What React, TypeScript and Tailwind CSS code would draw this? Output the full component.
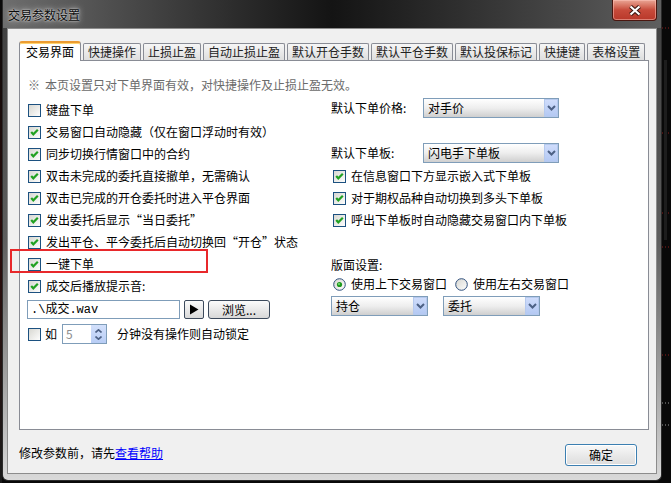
import React from 'react'

const CheckBox = ({ checked = false }: { checked?: boolean }) => (
    <svg width="13" height="13" viewBox="0 0 13 13" className="shrink-0">
        <defs>
            <linearGradient id="cbfill" x1="0" y1="0" x2="1" y2="1">
                <stop offset="0" stopColor="#d6d6d0" />
                <stop offset="1" stopColor="#ffffff" />
            </linearGradient>
        </defs>
        <rect x="0.5" y="0.5" width="12" height="12" fill="url(#cbfill)" stroke="#1c5180" />
        {checked && <path d="M3.2 6 L5.3 8.3 L9.8 3.8" fill="none" stroke="#21a121" strokeWidth="2.2" />}
    </svg>
)

const Radio = ({ checked = false }: { checked?: boolean }) => (
    <svg width="13" height="13" viewBox="0 0 13 13" className="shrink-0">
        <defs>
            <linearGradient id="rbfill" x1="0" y1="0" x2="1" y2="1">
                <stop offset="0" stopColor="#d6d6d0" />
                <stop offset="1" stopColor="#ffffff" />
            </linearGradient>
        </defs>
        <circle cx="6.5" cy="6.5" r="5.8" fill="url(#rbfill)" stroke="#2f4f7c" />
        {checked && (
            <>
                <circle cx="6.5" cy="6.5" r="2.6" fill="#1e9a1e" />
                <circle cx="6" cy="6" r="1" fill="#7fe07f" />
            </>
        )}
    </svg>
)

const Chevron = () => (
    <svg width="9" height="6" viewBox="0 0 9 6">
        <path d="M1 1 L4.5 4.5 L8 1" fill="none" stroke="#4d6185" strokeWidth="2" />
    </svg>
)

const Select = ({ value, width }: { value: string; width: string }) => (
    <div className={`flex h-[20px] ${width} border border-[#7f9db9] bg-linear-to-b from-[#ffffff] via-[#eeeeee] to-[#cfcfcf]`}>
        <span className="flex flex-1 items-center pl-[4px] text-[12px] leading-none text-black">{value}</span>
        <span className="flex w-[14px] items-center justify-center border border-[#b5c9ee] bg-linear-to-b from-[#cfdcfb] to-[#b4c9f3]">
            <Chevron />
        </span>
    </div>
)

const CheckRow = ({ checked, label }: { checked?: boolean; label: string }) => (
    <div className="flex h-[22px] items-center gap-[5px]">
        <CheckBox checked={checked} />
        <span className="whitespace-nowrap leading-none">{label}</span>
    </div>
)

const tabs = ['交易界面', '快捷操作', '止损止盈', '自动止损止盈', '默认开仓手数', '默认平仓手数', '默认投保标记', '快捷键', '表格设置']

const SideStrip = () => (
    <svg width="9" height="483" viewBox="0 0 9 483" className="block">
        <rect width="9" height="483" fill="#090909" />
        {[28, 133, 213, 247, 355].map((y) => (
            <line key={y} x1="0" y1={y} x2="9" y2={y} stroke="#8c1c1c" strokeDasharray="1 2" />
        ))}
        {[403, 425].map((y) => (
            <line key={y} x1="0" y1={y} x2="9" y2={y} stroke="#9a9a9a" strokeDasharray="1 2" />
        ))}
        <rect x="2" y="60" width="3" height="180" fill="#1d1d1d" />
    </svg>
)

const App = () => {
    return (
        <div className="flex h-[483px] w-[671px] overflow-hidden bg-[#090909] font-['Noto_Sans_CJK_SC',sans-serif] text-[12px] text-black">
            <div className="w-[2px] bg-linear-to-b from-[#0a0a0a] via-[#2a0a0a] to-[#1a1a1a]" />

            {/* window */}
            <div className="flex h-[481px] w-[660px] flex-col rounded-b-[6px] border border-t-0 border-[#2b2b2b] bg-linear-to-b from-[#3e3e3e] via-[#5e5e5e] to-[#d9d9d9]">
                {/* title bar */}
                <div className="flex h-[28px] items-start bg-linear-to-r from-[#6e6e6e] via-[#141414] to-[#5f5f5f]">
                    <span className="pl-[5px] pt-[8px] text-[12px] leading-[14px] text-[#0a0a0a] [text-shadow:0_0_6px_rgba(255,255,255,0.85),0_0_2px_rgba(255,255,255,0.9)]">
                        交易参数设置
                    </span>
                    <div className="ml-auto mr-[4px] flex h-[21px] w-[45px] items-center justify-center rounded-b-[4px] border border-t-0 border-[#4a160f] bg-linear-to-b from-[#e9a595] via-[#c74a3a] to-[#b8382a] shadow-[inset_0_0_0_1px_rgba(255,200,190,0.5)]">
                        <svg width="14" height="11" viewBox="0 0 14 11">
                            <path d="M2.5 1.5 L11.5 9.5 M11.5 1.5 L2.5 9.5" stroke="#3b1710" strokeWidth="4.2" />
                            <path d="M2.5 1.5 L11.5 9.5 M11.5 1.5 L2.5 9.5" stroke="#ffffff" strokeWidth="2.2" />
                        </svg>
                    </div>
                </div>

                {/* client area */}
                <div className="mx-[4px] flex h-[446px] flex-col border border-[#8c8c8c] bg-[#f0f0f0]">
                    {/* tabs */}
                    <div className="relative z-10 flex items-end gap-[2px] pl-[11px] pt-[12px]">
                        {tabs.map((t, i) =>
                            i === 0 ? (
                                <div
                                    key={t}
                                    className="-mb-[1px] flex h-[20px] items-center rounded-t-[3px] border border-b-0 border-t-2 border-[#898c95] border-t-[#eb9b32] bg-white px-[6px] leading-none shadow-[inset_0_1px_0_#ffd46e]"
                                >
                                    {t}
                                </div>
                            ) : (
                                <div
                                    key={t}
                                    className="flex h-[17px] items-center rounded-t-[2px] border border-b-0 border-[#898c95] bg-linear-to-b from-[#f6f6f6] to-[#dedede] px-[4px] leading-none text-[#222]"
                                >
                                    {t}
                                </div>
                            )
                        )}
                    </div>

                    {/* tab panel */}
                    <div className="ml-[11px] mr-[7px] flex h-[370px] flex-col border border-[#898c95] bg-white pl-[8px] pt-[13px]">
                        <div className="flex h-[22px] items-center leading-none text-[#6b6b6b]">
                            <span>※</span>
                            <span className="ml-[5px]">本页设置只对下单界面有效，对快捷操作及止损止盈无效。</span>
                        </div>

                        <div className="mt-[2px] flex">
                            {/* left column */}
                            <div className="flex w-[303px] flex-col pt-[1px]">
                                <CheckRow label="键盘下单" />
                                <CheckRow checked label="交易窗口自动隐藏（仅在窗口浮动时有效）" />
                                <CheckRow checked label="同步切换行情窗口中的合约" />
                                <CheckRow checked label="双击未完成的委托直接撤单，无需确认" />
                                <CheckRow checked label="双击已完成的开仓委托时进入平仓界面" />
                                <CheckRow checked label="发出委托后显示“当日委托”" />
                                <CheckRow checked label="发出平仓、平今委托后自动切换回“开仓”状态" />
                                <div className="relative">
                                    <CheckRow checked label="一键下单" />
                                    <div className="absolute left-[-18px] top-[-4px] h-[24px] w-[198px] border-2 border-[#e8282b]" />
                                </div>
                                <CheckRow checked label="成交后播放提示音:" />

                                <div className="-ml-[1px] mt-[3px] flex h-[19px] items-stretch gap-[4px]">
                                    <div className="flex w-[153px] items-center border border-[#7f9db9] bg-white pl-[3px] font-['Liberation_Mono','Noto_Sans_CJK_SC',monospace] text-[12px] leading-none">
                                        .\成交.wav
                                    </div>
                                    <div className="flex w-[20px] items-center justify-center rounded-[2px] border border-[#3c4a5c] bg-linear-to-b from-[#fbfbfb] to-[#d8d8d8]">
                                        <svg width="10" height="11" viewBox="0 0 10 11">
                                            <path d="M1 0.5 L9.5 5.5 L1 10.5 Z" fill="#000" />
                                        </svg>
                                    </div>
                                    <div className="flex w-[62px] items-center justify-center rounded-[3px] border border-[#3c4a5c] bg-linear-to-b from-[#fbfbfb] to-[#d8d8d8] leading-none">
                                        浏览...
                                    </div>
                                </div>

                                <div className="mt-[5px] flex h-[20px] items-center">
                                    <CheckBox />
                                    <span className="ml-[4px] leading-none">如</span>
                                    <div className="ml-[5px] flex h-[20px] w-[45px] border border-[#7f9db9] bg-white">
                                        <span className="flex flex-1 items-center pl-[3px] leading-none text-[#8d8d8d]">5</span>
                                        <div className="flex w-[15px] flex-col items-center justify-center gap-[3px] bg-linear-to-b from-[#d3e0fb] to-[#b8cdf5]">
                                            <svg width="7" height="4" viewBox="0 0 7 4">
                                                <path d="M0.5 3.5 L3.5 0.8 L6.5 3.5" fill="none" stroke="#4d6185" strokeWidth="1.6" />
                                            </svg>
                                            <svg width="7" height="4" viewBox="0 0 7 4">
                                                <path d="M0.5 0.5 L3.5 3.2 L6.5 0.5" fill="none" stroke="#4d6185" strokeWidth="1.6" />
                                            </svg>
                                        </div>
                                    </div>
                                    <span className="ml-[10px] leading-none">分钟没有操作则自动锁定</span>
                                </div>
                            </div>

                            {/* right column */}
                            <div className="flex flex-col">
                                <div className="flex h-[20px] items-center">
                                    <span className="w-[92px] leading-none">默认下单价格:</span>
                                    <Select value="对手价" width="w-[136px]" />
                                </div>
                                <div className="mt-[25px] flex h-[20px] items-center">
                                    <span className="w-[92px] leading-none">默认下单板:</span>
                                    <Select value="闪电手下单板" width="w-[136px]" />
                                </div>
                                <div className="mt-[2px] flex flex-col pl-[2px]">
                                    <CheckRow checked label="在信息窗口下方显示嵌入式下单板" />
                                    <CheckRow checked label="对于期权品种自动切换到多头下单板" />
                                    <CheckRow checked label="呼出下单板时自动隐藏交易窗口内下单板" />
                                </div>
                                <div className="mt-[24px] flex h-[20px] items-center leading-none">版面设置:</div>
                                <div className="flex h-[18px] items-center pl-[2px]">
                                    <Radio checked />
                                    <span className="ml-[5px] leading-none">使用上下交易窗口</span>
                                    <span className="ml-[8px]">
                                        <Radio />
                                    </span>
                                    <span className="ml-[5px] leading-none">使用左右交易窗口</span>
                                </div>
                                <div className="mt-[3px] flex gap-[15px]">
                                    <Select value="持仓" width="w-[97px]" />
                                    <Select value="委托" width="w-[97px]" />
                                </div>
                            </div>
                        </div>
                    </div>

                    {/* bottom bar */}
                    <div className="mt-[14px] flex h-[22px] items-center pl-[11px] pr-[19px]">
                        <span className="mb-[4px] leading-none">
                            修改参数前，请先<span className="text-[#0000ff] underline">查看帮助</span>
                        </span>
                        <div className="ml-auto flex h-[22px] w-[72px] items-center justify-center rounded-[3px] border border-[#3c7fb1] bg-linear-to-b from-[#f8f8f8] to-[#dcdcdc] leading-none shadow-[inset_0_0_0_1px_#ffffff]">
                            确定
                        </div>
                    </div>
                </div>
            </div>

            <SideStrip />
        </div>
    )
}

export default App
